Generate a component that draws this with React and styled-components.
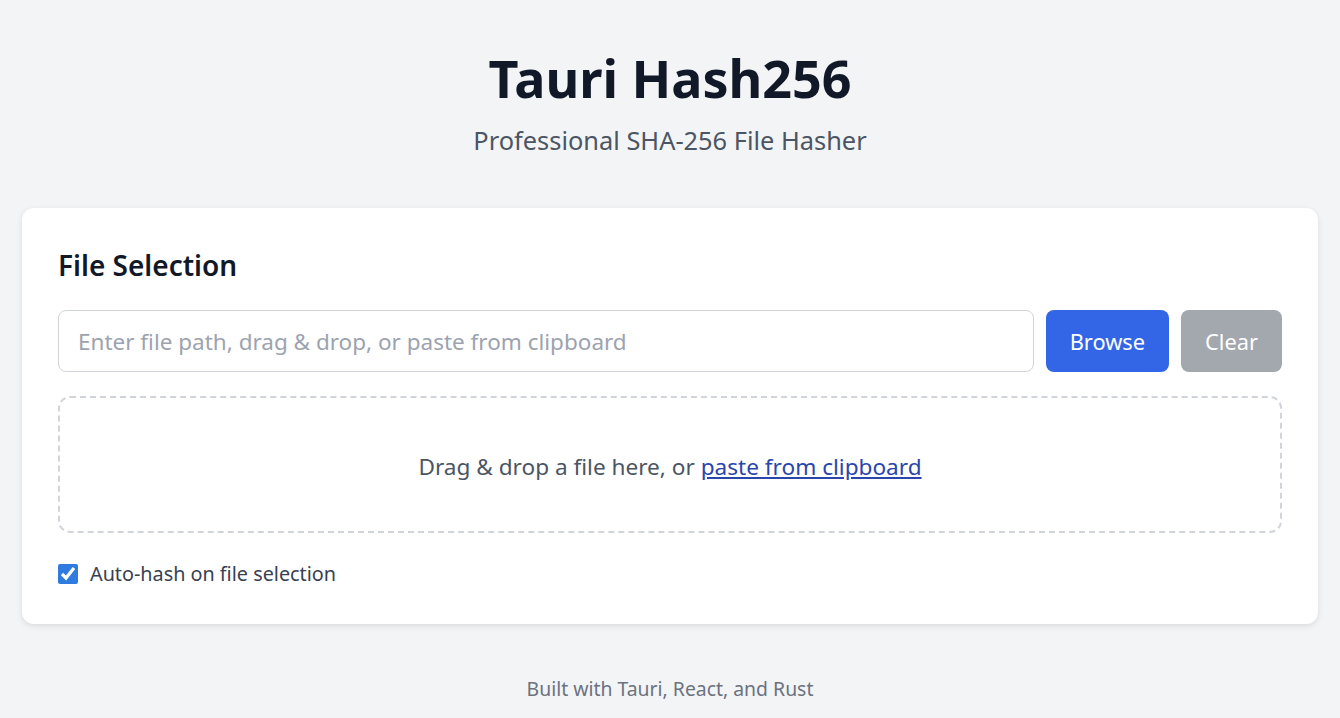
import styled, { createGlobalStyle } from "styled-components";

const GlobalStyle = createGlobalStyle`
  * {
    box-sizing: border-box;
  }
  body {
    margin: 0;
    background: #f3f4f6;
    font-family: "Noto Sans", "Open Sans", sans-serif;
    color: #111827;
  }
`;

const App = () => {
  return (
    <>
      <GlobalStyle />
      <Page>
        <Header>
          <Title>Tauri Hash256</Title>
          <Subtitle>Professional SHA-256 File Hasher</Subtitle>
        </Header>

        <Card>
          <CardTitle>File Selection</CardTitle>
          <InputRow>
            <PathInput
              type="text"
              placeholder="Enter file path, drag & drop, or paste from clipboard"
            />
            <Button $variant="primary">Browse</Button>
            <Button $variant="muted">Clear</Button>
          </InputRow>

          <DropZone>
            Drag &amp; drop a file here, or <PasteLink href="#">paste from clipboard</PasteLink>
          </DropZone>

          <CheckRow>
            <Checkbox type="checkbox" defaultChecked />
            Auto-hash on file selection
          </CheckRow>
        </Card>

        <Footer>Built with Tauri, React, and Rust</Footer>
      </Page>
    </>
  );
};

const Page = styled.div`
  padding: 43px 22px 0;
`;

const Header = styled.header`
  text-align: center;
  margin-bottom: 51px;
`;

const Title = styled.h1`
  margin: 0 0 10px;
  font-size: 52px;
  line-height: 70px;
  font-weight: 700;
  color: #111827;
`;

const Subtitle = styled.p`
  margin: 0;
  font-size: 25.4px;
  line-height: 34px;
  color: #4b5563;
`;

const Card = styled.section`
  background: #fff;
  border-radius: 12px;
  box-shadow: 0 2px 6px rgba(0, 0, 0, 0.1);
  padding: 36px 36px 37px;
`;

const CardTitle = styled.h2`
  margin: 0 0 24px;
  font-size: 28px;
  line-height: 42px;
  font-weight: 600;
  color: #111827;
`;

const InputRow = styled.div`
  display: flex;
  gap: 12px;
`;

const PathInput = styled.input`
  flex: 1;
  height: 62px;
  padding: 0 19px;
  border: 1px solid #d1d5db;
  border-radius: 8px;
  font-family: inherit;
  font-size: 22.5px;
  color: #111827;
  outline: none;

  &::placeholder {
    color: #9ca3af;
  }
`;

const Button = styled.button`
  height: 62px;
  padding: 0 24px;
  border: none;
  border-radius: 8px;
  font-family: inherit;
  font-size: 21.8px;
  color: #fff;
  background: ${({ $variant }) => ($variant === "primary" ? "#3366e6" : "#a3a7ae")};
  cursor: pointer;
`;

const DropZone = styled.div`
  margin-top: 24px;
  padding: 52px 20px 48px;
  border: 2px dashed #d1d5db;
  border-radius: 12px;
  text-align: center;
  font-size: 22.6px;
  line-height: 33px;
  color: #4b5563;
`;

const PasteLink = styled.a`
  color: #2a45ad;
  text-decoration: underline;
`;

const CheckRow = styled.label`
  display: flex;
  align-items: center;
  gap: 12px;
  margin-top: 28px;
  font-size: 19.8px;
  line-height: 26px;
  color: #374151;
`;

const Checkbox = styled.input`
  width: 20px;
  height: 20px;
  margin: 0;
  accent-color: #2f7be0;
`;

const Footer = styled.footer`
  margin-top: 52px;
  text-align: center;
  font-size: 19.4px;
  line-height: 26px;
  color: #6b7280;
`;

export default App;
